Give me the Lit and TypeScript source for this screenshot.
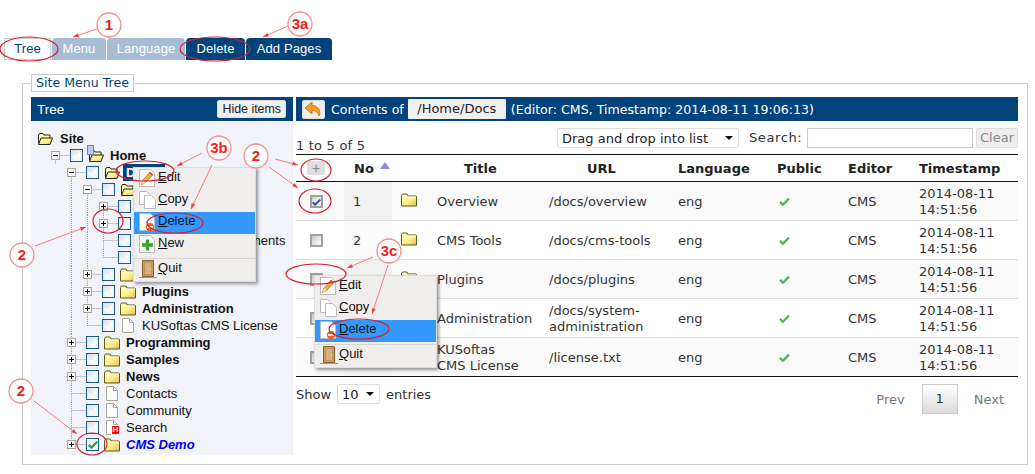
import { LitElement, html, css, svg } from "lit";
import { customElement } from "lit/decorators.js";

const folder = (open = false) => html`<svg class="ico" width="16" height="14" viewBox="0 0 16 14">
  <defs><linearGradient id="fg" x1="0" y1="0" x2="1" y2="1"><stop offset="0" stop-color="#fffcc0"/><stop offset=".55" stop-color="#ffef88"/><stop offset="1" stop-color="#e0b860"/></linearGradient></defs>
  ${open
    ? svg`<path d="M1.500 11.500V3l1-1.500h3.500l1 1.500h6v3" fill="#fff6b0" stroke="#222"/><path d="M1.500 12.500L4 6h11.500l-2.500 6.500z" fill="url(#fg)" stroke="#222"/>`
    : svg`<path d="M.5 13V2.500l1-1.500h4.500l1 2h8l.5 1v9z" fill="url(#fg)" stroke="#5c5c14"/><path d="M1 4h14" stroke="#fffce0"/>`}
</svg>`;
const page = () => html`<svg class="ico" width="16" height="15" viewBox="0 0 16 15"><path d="M2.500 .5h7l4 4v10h-11z" fill="#fff" stroke="#aaa89a"/><path d="M9.500 .5v4h4" fill="none" stroke="#aaa89a"/></svg>`;
const check = (c = "#4caa4c", w = 13, h = 11) => html`<svg width=${w} height=${h} viewBox="0 0 13 11"><path d="M1 6l3.500 3.500L12 2" fill="none" stroke=${c} stroke-width="2.800"/></svg>`;

interface Node { l: number; e?: "plus" | "minus"; g?: number[]; i: "open" | "folder" | "home" | "page" | "hidden"; t: string; c?: string; last?: boolean; noTop?: boolean; on?: boolean; }
const tree: Node[] = [
  { l: 0, i: "open", t: "Site", c: "b" },
  { l: 1, e: "minus", i: "home", t: "Home", c: "b", last: false, noTop: true },
  { l: 2, e: "minus", i: "open", t: "D", c: "b sel", noTop: true },
  { l: 3, e: "minus", g: [2], i: "open", t: "", c: "b", noTop: true },
  { l: 4, e: "plus", g: [2, 3], i: "folder", t: "", c: "b", noTop: true },
  { l: 4, e: "plus", g: [2, 3], i: "folder", t: "", c: "b" },
  { l: 4, g: [2, 3], i: "page", t: "", c: "tail" },
  { l: 4, g: [2, 3], i: "page", t: "", last: true },
  { l: 3, e: "plus", g: [2], i: "folder", t: "", c: "b" },
  { l: 3, e: "plus", g: [2], i: "folder", t: "Plugins", c: "b" },
  { l: 3, e: "plus", g: [2], i: "folder", t: "Administration", c: "b" },
  { l: 3, g: [2], i: "page", t: "KUSoftas CMS License", last: true },
  { l: 2, e: "plus", i: "folder", t: "Programming", c: "b" },
  { l: 2, e: "plus", i: "folder", t: "Samples", c: "b" },
  { l: 2, e: "plus", i: "folder", t: "News", c: "b" },
  { l: 2, i: "page", t: "Contacts" },
  { l: 2, i: "page", t: "Community" },
  { l: 2, i: "hidden", t: "Search" },
  { l: 2, e: "plus", i: "folder", t: "CMS Demo", c: "b demo", on: true, last: true },
];

const connector = (n: Node) => html`<svg class="conn" width="23" height="17" viewBox="0 0 23 17">
  <g stroke="#999" stroke-dasharray="1 1" fill="none">
    ${n.noTop ? "" : svg`<path d="M8.500 0v8.500"/>`}
    ${n.last ? "" : svg`<path d="M8.500 8.500V17"/>`}
    <path d="M8.500 8.500H23"/>
  </g>
  ${n.e ? svg`<rect x="4.500" y="4.500" width="8" height="8" fill="#fff" stroke="#a5a594"/><path d="M6 8.500h5${n.e === "plus" ? "M8.500 6v5" : ""}" stroke="#000"/>` : ""}
</svg>`;

const rows = [
  { t: ["Overview"], u: ["/docs/overview"], on: true },
  { t: ["CMS Tools"], u: ["/docs/cms-tools"] },
  { t: ["Plugins"], u: ["/docs/plugins"] },
  { t: ["Administration"], u: ["/docs/system-", "administration"] },
  { t: ["KUSoftas", "CMS License"], u: ["/license.txt"] },
];

const lines = (a: string[]) => a.map((s, i) => html`${i ? html`<br />` : ""}${s}`);

const mPage = (extra: unknown) => html`<svg width="16" height="18" viewBox="0 0 16 18"><path d="M.5 .5h11l4 4v13H.5z" fill="#fff" stroke="#bbb"/>${extra}</svg>`;
const mEdit = () => mPage(svg`<path d="M2 16l2-5 7-8 3 2.500-7.500 8z" fill="#f0b040" stroke="#a06020" stroke-width=".7"/><path d="M2 16l2-5 2.500 2.500z" fill="#f6dcb0"/><path d="M11 3l3 2.500-1 1.200-3-2.500z" fill="#d05040"/>`);
const mCopy = () => html`<svg width="17" height="18" viewBox="0 0 17 18"><path d="M.5 .5h7l3 3v10H.5z" fill="#fff" stroke="#bbb"/><path d="M5.500 4.500h7l4 4v9h-11z" fill="#fff" stroke="#bbb"/></svg>`;
const mDel = () => mPage(svg`<circle cx="11" cy="14" r="4" fill="#e8602a"/><path d="M8 14h6" stroke="#fff" stroke-width="1.600"/>`);
const mNew = () => mPage(svg`<path d="M3 10h11M8.500 4.500v11" stroke="#3aa12a" stroke-width="3.400"/>`);
const mQuit = () => html`<svg width="18" height="18" viewBox="0 0 18 18"><path d="M3.500 .5h11v16h-11z" fill="#c99a64" stroke="#8a6030"/><path d="M5.500 2.500h7v12h-7z" fill="#d8b080" stroke="#b08850" stroke-width=".6"/><circle cx="11.500" cy="9" r=".9" fill="#f0d040"/><path d="M0 17.500h18" stroke="#999"/></svg>`;

const menu = (cls: string, items: [string, string, () => unknown][]) => html`<div class="menu ${cls}">
  ${items.map(([k, rest, ic]) => k === "-" ? html`<div class="msep"></div>` : html`<div class="mi ${k === "D" ? "hot" : ""}"><span class="mic">${ic()}</span><span class="mt"><u>${k}</u>${rest}</span></div>`)}
</div>`;

const circles: [number, number, string][] = [[109, 25, "1"], [300, 24, "3a"], [219, 148, "3b"], [256, 156, "2"], [22, 255, "2"], [21, 391, "2"], [389, 251, "3c"]];
const ellipses: number[][] = [[29, 49, 29, 12], [215, 49, 35, 12], [145, 171, 29, 10], [175, 223, 28, 10], [108, 221, 15, 12], [92, 444, 15, 11], [316, 170, 15, 11], [315, 201, 16, 12], [316, 274, 30, 10], [359, 329, 30, 10]];
const arrows: number[][] = [[97, 29, 73, 37], [288, 26, 263, 37], [202, 153, 177, 166], [212, 165, 191, 209], [275, 159, 298, 165], [269, 167, 298, 188], [35, 246, 86, 227], [34, 401, 77, 434], [373, 257, 347, 268], [388, 265, 372, 314]];

const arrow = ([x1, y1, x2, y2]: number[]) => {
  const a = Math.atan2(y2 - y1, x2 - x1), s = 6;
  const p = (d: number) => `${x2 - s * Math.cos(a + d)},${y2 - s * Math.sin(a + d)}`;
  return svg`<path d="M${x1} ${y1}L${x2} ${y2}" stroke="#f47c7c" stroke-width="1"/><polygon points="${x2},${y2} ${p(0.35)} ${p(-0.35)}" fill="#ee4444"/>`;
};

@customElement("app-root")
export class AppRoot extends LitElement {
  static styles = css`
    :host { display: block; position: relative; width: 1035px; height: 474px; overflow: hidden; background: #fff; font-family: "DejaVu Sans", sans-serif; font-size: 13px; color: #333; }
    .tabs { display: flex; gap: 1px; padding: 38px 0 0 4px; height: 22px; font: 13px/22px "Liberation Sans", sans-serif; letter-spacing: .1px; }
    .tab { border-radius: 4px 4px 0 0; color: #fff; text-align: center; box-sizing: border-box; }
    .tab.cur { width: 47px; background: #fff; border: 1px solid #ccc; border-radius: 0; color: #03437c; line-height: 20px; }
    .tab.off { background: #a6bdd5; }
    .tab.dark { background: #03437c; }
    fieldset { margin: 14px 0 0 22px; width: 1006px; height: 391px; box-sizing: border-box; border: 1px solid #ccc; padding: 5px 8px 0; }
    legend { margin-left: 0; padding: 0 4px; border: 1px solid #ccc; height: 18px; box-sizing: border-box; width: 103px; font-size: 12.600px; line-height: 16px; color: #03437c; white-space: nowrap; }
    .cols { display: flex; gap: 3px; }
    .left { width: 262px; height: 358px; background: #f1f3f9; flex: none; }
    .bar { height: 24px; background: #03437c; color: #fff; display: flex; align-items: center; font-size: 12.600px; }
    .left .bar { justify-content: space-between; padding: 0 7px 0 6px; font-family: "Liberation Sans", sans-serif; font-size: 13.500px; }
    .hide { background: #f0f0f0; font: 12.400px/16px "Liberation Sans", sans-serif; padding: 0 4px; border: 1px solid #ddd; border-radius: 2px; color: #222; }
    .tree { padding-top: 9px; font: 13px/17px "Liberation Sans", sans-serif; color: #111; }
    .row { display: flex; height: 17px; align-items: center; padding-left: 16px; white-space: nowrap; }
    .row.root { padding-left: 6px; }
    .guide { width: 16px; height: 17px; flex: none; box-sizing: border-box; }
    .guide.on { background: repeating-linear-gradient(#999 0 1px, transparent 1px 2px) no-repeat 8px 0 / 1px 100%; }
    .conn { flex: none; }
    .cb { width: 13px; height: 13px; box-sizing: border-box; border: 1px solid #1d5a8c; background: linear-gradient(135deg, #dfe2e8, #fdfdfe); flex: none; margin-right: 5px; display: flex; align-items: center; justify-content: center; }
    .cb svg { width: 10px; height: 9px; }
    .cb.on { background: #f6f8fb; }
    .ico { flex: none; width: 16px; }
    .icw { width: 16px; flex: none; margin-right: 6px; display: flex; position: relative; }
    .root .icw { margin-right: 7px; }
    .row .b { font-weight: bold; }
    .row .sel { background: #03437c; color: #fff; padding: 0 30px 0 3px; margin-left: -3px; }
    .row .demo { color: #0000ff; font-style: italic; }
    .row .tail::after { content: "ments"; margin-left: 92px; }
    .hbadge { position: absolute; left: 8px; top: 6px; width: 7px; height: 8px; background: #f00; color: #fff; font: bold 8px/8px "Liberation Sans", sans-serif; text-align: center; outline: 1px solid #fff; }
    .homebadge { position: absolute; left: -1px; top: -4px; width: 5px; height: 8px; background: #b8cbe8; border: 1px solid #5f86bd; }
    .right { width: 722px; flex: none; }
    .back { width: 23px; height: 19px; background: #eee; border: 1px solid #ddd; box-sizing: border-box; margin: 0 6px 0 6px; border-radius: 2px; display: flex; align-items: center; justify-content: center; }
    .path { width: 98px; height: 20px; background: #f0f0f0; color: #222; text-align: center; line-height: 20px; margin: 0 5px 0 4px; border-radius: 1px; font-size: 13px; }
    .tools { display: flex; align-items: flex-start; height: 33px; }
    .count { margin-top: 17px; width: 261px; line-height: 16px; letter-spacing: .2px; }
    .sel-box { margin-top: 7px; height: 20px; box-sizing: border-box; border: 1px solid #ddd; border-radius: 2px; display: flex; align-items: center; justify-content: space-between; color: #222; background: #fff; padding: 0 5px 0 4px; }
    .tools .sel-box { width: 182px; }
    .arr { width: 0; height: 0; border: 4px solid transparent; border-top: 4px solid #111; border-bottom: 0; }
    .slabel { margin: 9px 4px 0 10px; width: 54px; line-height: 16px; letter-spacing: .6px; white-space: nowrap; }
    .search { margin-top: 7px; width: 166px; height: 20px; box-sizing: border-box; border: 1px solid #ccc; }
    .clear { margin: 7px 0 0 3px; width: 42px; height: 20px; box-sizing: border-box; background: #eee; border: 1px solid #ddd; border-radius: 2px; color: #888; text-align: center; line-height: 18px; font-size: 13px; }
    table { table-layout: fixed; border-collapse: collapse; width: 722px; border-top: 1px solid #111; border-bottom: 1px solid #111; }
    th { height: 26px; border-bottom: 1px solid #111; padding: 0 0 0 9px; text-align: left; color: #222; font-weight: bold; }
    th.pt { padding-left: 36px; }
    th.pu { padding-left: 47px; }
    th.np { padding-left: 0; }
    td { height: 37px; padding: 1px 0 0 9px; border-top: 1px solid #ddd; line-height: 16px; box-sizing: content-box; }
    td.ok { padding-left: 11px; }
    tbody tr:first-child td { border-top: 0; }
    tbody tr:nth-child(odd) { background: #f9f9f9; }
    tbody tr:nth-child(odd) td.sort { background: #f1f1f1; }
    tbody tr:nth-child(even) td.sort { background: #fafafa; }
    .thno { display: flex; align-items: center; padding-left: 10px; gap: 6px; position: relative; }
    .tri { width: 0; height: 0; border: 5px solid transparent; border-top: 0; border-bottom: 7px solid #8a8ae0; margin-top: -6px; }
    .plus { width: 18px; height: 14px; margin: 0 0 0 11px; background: #ddd; border-radius: 2px; color: #888; font: 14px/14px "Liberation Sans", sans-serif; text-align: center; }
    .rcb { width: 13px; height: 13px; box-sizing: border-box; margin-left: 5px; border: 2px solid #a0a0a0; background: linear-gradient(135deg, #cfcfd8, #fff); display: flex; align-items: center; justify-content: center; }
    .rcb.off { background: linear-gradient(135deg, #c8c8c8, #fff); }
    .foot { display: flex; align-items: flex-start; justify-content: space-between; padding-top: 7px; }
    .show { display: flex; align-items: center; gap: 6px; height: 20px; }
    .show .sel-box { margin: 0; width: 43px; }
    .pager { display: flex; align-items: center; color: #777; margin-right: 14px; height: 30px; }
    .pg1 { width: 36px; height: 30px; box-sizing: border-box; margin: 0 16px 0 17px; border: 1px solid #ccc; background: linear-gradient(#fff, #dcdcdc); color: #333; text-align: center; line-height: 28px; }
    .menu { position: absolute; width: 123px; box-sizing: border-box; background: #f0eeec; border: 1px solid #ddd; box-shadow: 2px 2px 3px rgba(0,0,0,.4); font: 13px/18px "Liberation Sans", sans-serif; color: #111; }
    .m1 { left: 133px; top: 167px; height: 115px; }
    .m2 { left: 314px; top: 275px; height: 93px; }
    .mi { display: flex; height: 22px; align-items: center; }
    .mi.hot { background: #3399ff; }
    .mt { padding-bottom: 4px; }
    .mic { width: 24px; padding: 0 0 2px 5px; box-sizing: border-box; display: flex; align-items: center; }
    .msep { height: 1px; background: #d8d6d4; margin: 2px 0 0; }
    .notes { position: absolute; inset: 0; width: 1035px; height: 474px; pointer-events: none; }
    .notes text { font: bold 15px "Liberation Sans", sans-serif; fill: #ee2222; text-anchor: middle; }
  `;

  render() {
    return html`
      <div class="tabs">
        <div class="tab cur">Tree</div>
        <div class="tab off" style="width:54px">Menu</div>
        <div class="tab off" style="width:78px">Language</div>
        <div class="tab dark" style="width:59px">Delete</div>
        <div class="tab dark" style="width:86px">Add Pages</div>
      </div>
      <fieldset>
        <legend>Site Menu Tree</legend>
        <div class="cols">
          <div class="left">
            <div class="bar"><span>Tree</span><span class="hide">Hide items</span></div>
            <div class="tree">${tree.map((n) => this.node(n))}</div>
          </div>
          <div class="right">
            <div class="bar">
              <span class="back"><svg width="19" height="17" viewBox="0 0 19 17"><path d="M8 1L1 7l7 6V9.500c4 0 6 1.500 7 5.500 2-5-.5-10.500-7-10.500z" fill="#f59a2c" stroke="#d87a10"/></svg></span>
              <span>Contents of</span><span class="path">/Home/Docs</span>
              <span>(Editor: CMS, Timestamp: 2014-08-11 19:06:13)</span>
            </div>
            <div class="tools">
              <div class="count">1 to 5 of 5</div>
              <div class="sel-box"><span>Drag and drop into list</span><span class="arr"></span></div>
              <div class="slabel">Search:</div>
              <div class="search"></div>
              <div class="clear">Clear</div>
            </div>
            <table>
              <colgroup>
                ${[48, 48, 36, 112, 129, 99, 71, 71, 108].map((w) => html`<col style="width:${w}px" />`)}
              </colgroup>
              <thead><tr>
                <th class="np"><div class="plus">+</div></th>
                <th class="np"><div class="thno">No<span class="tri"></span></div></th>
                <th></th><th class="pt">Title</th><th class="pu">URL</th><th>Language</th><th>Public</th><th>Editor</th><th>Timestamp</th>
              </tr></thead>
              <tbody>
                ${rows.map((r, i) => html`<tr>
                  <td><div class="rcb ${r.on ? "" : "off"}">${r.on ? check("#3a4fa0", 9, 8) : ""}</div></td>
                  <td class="sort">${i + 1}</td>
                  <td>${folder()}</td>
                  <td>${lines(r.t)}</td>
                  <td>${lines(r.u)}</td>
                  <td>eng</td>
                  <td class="ok">${check("#5cae5c", 11, 9)}</td>
                  <td>CMS</td>
                  <td>2014-08-11<br />14:51:56</td>
                </tr>`)}
              </tbody>
            </table>
            <div class="foot">
              <div class="show">Show <div class="sel-box"><span>10</span><span class="arr"></span></div> entries</div>
              <div class="pager"><span>Prev</span><span class="pg1">1</span><span>Next</span></div>
            </div>
          </div>
        </div>
      </fieldset>
      ${menu("m1", [["E", "dit", mEdit], ["C", "opy", mCopy], ["D", "elete", mDel], ["N", "ew", mNew], ["-", "", mNew], ["Q", "uit", mQuit]])}
      ${menu("m2", [["E", "dit", mEdit], ["C", "opy", mCopy], ["D", "elete", mDel], ["-", "", mNew], ["Q", "uit", mQuit]])}
      <svg class="notes" viewBox="0 0 1035 474" fill="none">
        ${ellipses.map(([cx, cy, rx, ry]) => svg`<ellipse cx=${cx} cy=${cy} rx=${rx} ry=${ry} stroke="#d81e2c" stroke-width="1.200"/>`)}
        ${arrows.map(arrow)}
        ${circles.map(([x, y, t]) => svg`<circle cx=${x} cy=${y} r="12" fill="#fff" stroke="#f49090" stroke-width="1.300"/><text x=${x} y=${y + 5}>${t}</text>`)}
      </svg>
    `;
  }

  node(n: Node) {
    if (n.l === 0) return html`<div class="row root"><span class="icw">${folder(true)}</span><span class=${n.c}>${n.t}</span></div>`;
    const guides = [];
    for (let k = 1; k < n.l; k++) guides.push(html`<span class="guide ${n.g?.includes(k) ? "on" : ""}"></span>`);
    let ic: unknown = page();
    if (n.i === "folder") ic = folder();
    if (n.i === "open") ic = folder(true);
    if (n.i === "home") ic = html`${folder(true)}<span class="homebadge"></span>`;
    if (n.i === "hidden") ic = html`${page()}<span class="hbadge">H</span>`;
    return html`<div class="row">${guides}${connector(n)}<span class="cb ${n.on ? "on" : ""}">${check(n.on ? "#2a9a2a" : "#fbfbfd")}</span><span class="icw">${ic}</span><span class=${n.c ?? ""}>${n.t}</span></div>`;
  }
}
